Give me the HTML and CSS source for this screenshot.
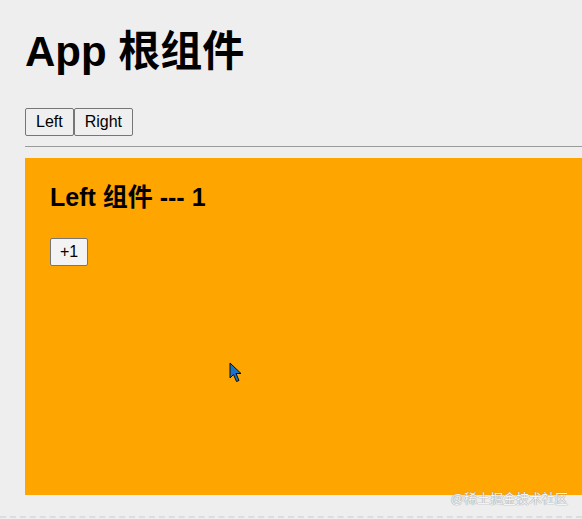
FILE: index.html
```html
<!DOCTYPE html>
<html lang="zh-CN">
<head>
    <meta charset="UTF-8">
    <meta name="viewport" content="width=device-width, initial-scale=1.0">
    <title>App 根组件</title>
    <link rel="stylesheet" href="styles.css">
</head>
<body>
    <div class="app">
        <h1>App 根组件</h1>
        <div class="tabs">
            <button>Left</button><button>Right</button>
        </div>
        <hr>
        <div class="left">
            <h3>Left 组件 --- 1</h3>
            <button>+1</button>
        </div>
    </div>

    <svg class="cursor" width="14" height="22" viewBox="0 0 14 22">
        <path d="M1 1 L1 16 L4.5 12.5 L7.5 19.5 L10 18.5 L7 11.5 L12 11.5 Z" fill="#1a73c8" stroke="#0a0a0a" stroke-width="1" stroke-linejoin="round"/>
    </svg>
    <div class="watermark">@稀土掘金技术社区</div>
    <div class="dashes"></div>
</body>
</html>
```

FILE: styles.css
```css
body {
    margin: 0;
    background-color: #eeeeee;
    font-family: "Liberation Sans", "Noto Sans CJK SC", sans-serif;
    color: #000;
    overflow: hidden;
}

.app {
    padding: 27px 0 0 25px;
}

h1 {
    margin: 0;
    font-size: 42px;
    line-height: 49px;
    font-weight: bold;
}

.tabs {
    display: flex;
    margin-top: 32px;
}

button {
    font-family: "Liberation Sans", "Noto Sans CJK SC", sans-serif;
    font-size: 16px;
    line-height: 18px;
    padding: 4px 10px;
    border: 1px solid #767676;
    border-radius: 2px;
    background-color: #efefef;
    color: #000;
}

hr {
    margin: 10px 0 0;
    border: 0;
    border-top: 1px solid #9a9a9a;
    height: 0;
}

.left {
    margin-top: 11px;
    height: 337px;
    padding: 24px 25px;
    background-color: #ffa500;
    box-sizing: border-box;
}

.left h3 {
    margin: 0 0 26px;
    font-size: 25px;
    line-height: 30px;
    font-weight: bold;
}

.left button {
    padding: 4px 9px;
    background-color: #f3f3f3;
}

.cursor {
    position: absolute;
    left: 229px;
    top: 362px;
}

.watermark {
    position: absolute;
    right: 14px;
    top: 488px;
    font-size: 13px;
    color: #f4f4f4;
    text-shadow: 0 0 1px #999, 0 0 1px #999;
}

.dashes {
    position: absolute;
    left: 0;
    right: 0;
    top: 516px;
    border-top: 2px dashed #dddddd;
}
```
